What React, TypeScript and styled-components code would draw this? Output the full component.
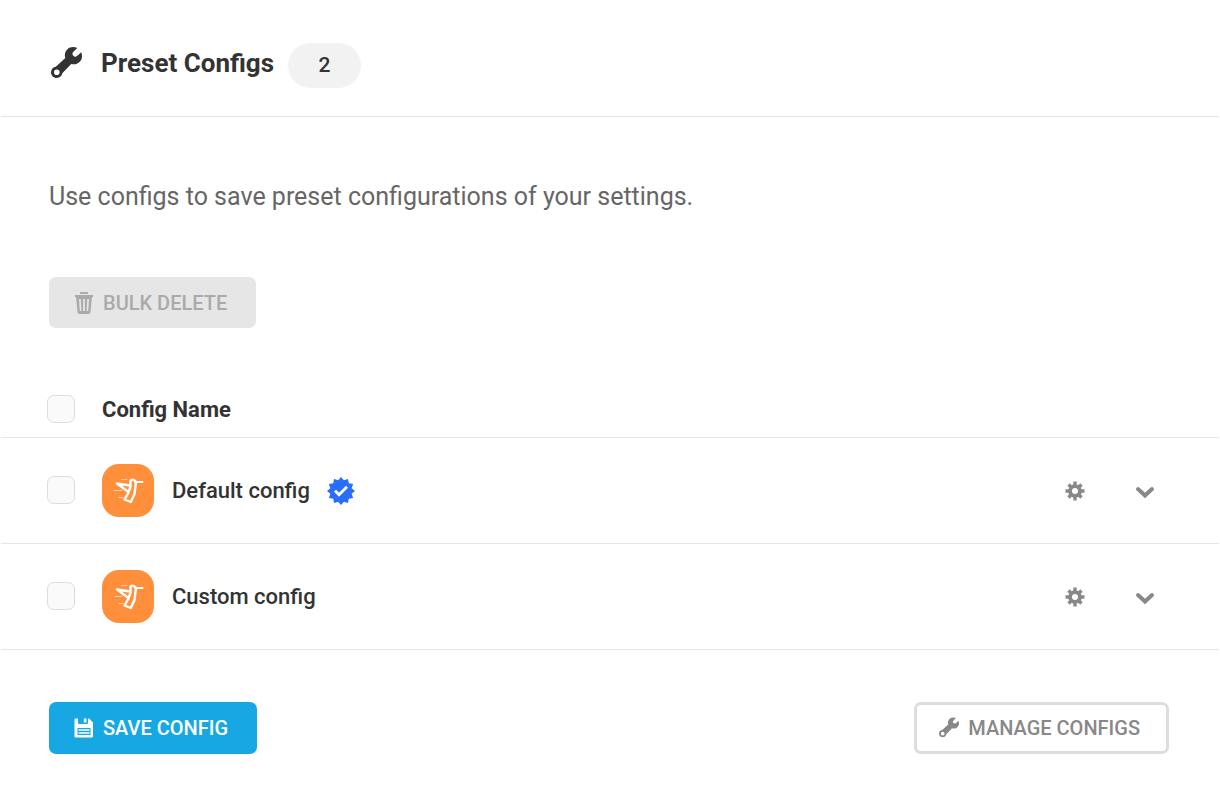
import React, { useState } from "react";
import styled, { createGlobalStyle, css } from "styled-components";

const GlobalStyle = createGlobalStyle`
  *, *::before, *::after { box-sizing: border-box; }
  body {
    margin: 0;
    background: #fff;
    color: #333;
    font-family: Roboto, "Liberation Sans", sans-serif;
  }
`;

const Panel = styled.main`
  padding: 0 1px;
`;

const PanelHeader = styled.header`
  display: flex;
  align-items: center;
  padding: 14px 48px 0;
  height: 117px;
  border-bottom: 1px solid #e6e6e6;
`;

const Title = styled.h1`
  display: flex;
  align-items: center;
  gap: 19px;
  margin: 0;
  padding: 0 0 4px 2px;
  font-size: 26px;
  line-height: 40px;
  font-weight: 700;
`;

const CountTag = styled.span`
  margin-left: 14px;
  min-width: 73px;
  border-radius: 23px;
  background: #f2f2f2;
  font-size: 21px;
  line-height: 45px;
  font-weight: 500;
  text-align: center;
`;

const Intro = styled.section`
  display: flex;
  flex-direction: column;
  align-items: flex-start;
  gap: 60px;
  padding: 60px 48px 54px;
`;

const Description = styled.p`
  margin: 0;
  color: #666;
  font-size: 25px;
  line-height: 40px;
`;

const Button = styled.button<{ $variant: "muted" | "primary" | "ghost" }>`
  display: flex;
  align-items: center;
  gap: 9px;
  height: 52px;
  padding: 0 29px 0 25px;
  border: 0;
  border-radius: 7px;
  font: 500 20px/28px Roboto, "Liberation Sans", sans-serif;
  text-transform: uppercase;
  cursor: pointer;

  ${(p) => p.$variant === "muted" && css`
    height: 51px;
    background: #e6e6e6;
    color: #aaa;
    cursor: default;
  `}
  ${(p) => p.$variant === "primary" && css`
    background: #17a8e3;
    color: #fff;
  `}
  ${(p) => p.$variant === "ghost" && css`
    padding: 0 26px 0 22px;
    border: 3px solid #ddd;
    background: transparent;
    color: #888;
  `}
`;

const Table = styled.table`
  width: 100%;
  border-collapse: separate;
  border-spacing: 0;
`;

const Cell = styled.td<{ $head?: boolean }>`
  height: ${(p) => (p.$head ? 56 : 106)}px;
  padding: 0;
  border-bottom: 1px solid #e6e6e6;
  font-size: 22px;
  line-height: 32px;
  font-weight: ${(p) => (p.$head ? 700 : 500)};
  text-align: left;
  vertical-align: middle;
`;

const CheckCell = styled(Cell)`
  width: 101px;
  padding: 0 0 2px 46px;
`;

const ActionCell = styled(Cell)`
  width: 220px;
  padding-right: 59px;
`;

const Checkbox = styled.input`
  appearance: none;
  display: block;
  width: 28px;
  height: 28px;
  margin: 0;
  border: 1px solid #ddd;
  border-radius: 7px;
  background: #fafafa;
  cursor: pointer;

  &:checked {
    border-color: #17a8e3;
    background: #17a8e3;
  }
`;

const ConfigLabel = styled.label`
  display: flex;
  align-items: center;
  gap: 17px;
`;

const Actions = styled.div`
  display: flex;
  justify-content: flex-end;
  gap: 40px;
`;

const IconButton = styled.button`
  display: flex;
  align-items: center;
  justify-content: center;
  width: 30px;
  height: 30px;
  padding: 0;
  border: 0;
  background: none;
  color: #888;
  cursor: pointer;
`;

const PanelFooter = styled.footer`
  display: flex;
  justify-content: space-between;
  padding: 52px 50px 40px 48px;
`;

const Wrench = ({ size }: { size: number }) => (
  <svg width={size} height={size} viewBox="0 1 31 31" overflow="visible" fill="currentColor" aria-hidden="true">
    <path
      fillRule="evenodd"
      d="M26.300 1C22.800-.6 18.700 0 16.200 2.500C13.900 4.800 13.300 8 14.300 10.900L4.800 19.700C2 20 0 22.200 0 25.200C0 28.500 2.500 31 5.800 31C8.600 31 10.900 29 11.300 26.300L20.200 17C23.200 17.900 26.500 17.100 28.800 14.800C31.300 12.300 31.700 8.500 30.200 5.200L26 9C24.800 9.900 23.400 9.900 22.500 8.900L22.100 8.500C21.200 7.500 21.300 6.200 22.200 5.100ZM5.800 22.500A2.800 2.800 0 1 0 5.800 28.100A2.800 2.800 0 1 0 5.800 22.500Z"
    />
  </svg>
);

const Trash = () => (
  <svg width="20" height="22" viewBox="0 0 20 22" fill="currentColor" aria-hidden="true">
    <path d="M6 0h8v2H6zM1 3h18v2H1z" />
    <path
      fillRule="evenodd"
      d="M2 5h16l-1.500 15q-.2 2-2 2h-9q-1.800 0-2-2zM5 7l.8 12h1.600L6.800 7zM9.100 7v12h1.800V7zM13.200 7l-.6 12h1.600L15 7z"
    />
  </svg>
);

const Floppy = () => (
  <svg width="20" height="20" viewBox="0 0 20 20" fill="currentColor" aria-hidden="true">
    <path
      fillRule="evenodd"
      d="M1.500 .5H4v4.500q0 1 1 1h8q1 0 1-1V.5h1l4 4v14q0 1-1 1H1.500q-1 0-1-1V1.500q0-1 1-1zM3.500 10v7h13v-7z"
    />
    <path d="M4.500 11.200h11v1.600h-11zM4.500 14.200h11v1.600h-11zM9.800 .5h2.700v4h-2.700z" />
  </svg>
);

const Gear = () => (
  <svg width="20" height="20" viewBox="-10 -10 20 20" fill="none" stroke="currentColor" aria-hidden="true">
    <circle r="4.900" strokeWidth="3.800" />
    <path
      strokeWidth="3.400"
      d="M0-9.500V-5M0 5V9.500M-9.500 0H-5M5 0H9.500M-6.500-6.500L-4-4M4 4L6.500 6.500M6.500-6.500L4-4M-4 4L-6.500 6.500"
    />
  </svg>
);

const Chevron = () => (
  <svg width="20" height="20" viewBox="0 0 20 20" fill="none" stroke="currentColor" aria-hidden="true">
    <path d="M3 8l7 6.500L17 8" strokeWidth="4" strokeLinecap="round" />
  </svg>
);

const HummingbirdLogo = () => (
  <svg width="53" height="53" viewBox="0 0 53 53" aria-hidden="true">
    <rect width="52" height="53" rx="17" fill="#ff8f3b" />
    <g fill="none" stroke="#fff" strokeLinejoin="round" strokeLinecap="round">
      <path strokeWidth="2.400" d="M28.500 16.500Q31.500 14.500 34 18L33.500 22L32.500 30L28.800 38L22.500 35.500L26 29.500L28.500 23ZM28 21.500L15 19.500L26.500 28" />
      <path strokeWidth="2" d="M33.500 18H40.500" />
      <path strokeWidth="1" opacity=".55" d="M19.500 15.500H25M12.500 26.500H20M16.500 33.500H21" />
    </g>
  </svg>
);

const starPoints = Array.from({ length: 24 }, (_, i) => {
  const angle = (i * Math.PI) / 12;
  const radius = i % 2 ? 11 : 14;
  return `${14 + radius * Math.sin(angle)},${14 - radius * Math.cos(angle)}`;
}).join(" ");

const VerifiedBadge = () => (
  <svg width="28" height="28" viewBox="0 0 28 28" role="img" aria-label="Default">
    <polygon points={starPoints} fill="#286efa" />
    <path d="M8 13.800L12 17.800L20 9.800" fill="none" stroke="#fff" strokeWidth="2.800" />
  </svg>
);

const configs = [
  { id: "default", name: "Default config", verified: true },
  { id: "custom", name: "Custom config", verified: false },
];

export default function App() {
  const [selected, setSelected] = useState<string[]>([]);
  const allSelected = selected.length === configs.length;
  const toggle = (id: string) =>
    setSelected((ids) => (ids.includes(id) ? ids.filter((x) => x !== id) : [...ids, id]));

  return (
    <>
      <GlobalStyle />
      <Panel>
        <PanelHeader>
          <Title>
            <Wrench size={31} />
            Preset Configs
          </Title>
          <CountTag>{configs.length}</CountTag>
        </PanelHeader>
        <Intro>
          <Description>Use configs to save preset configurations of your settings.</Description>
          <Button $variant="muted" type="button" disabled={selected.length === 0}>
            <Trash />
            Bulk Delete
          </Button>
        </Intro>
        <Table>
          <thead>
            <tr>
              <CheckCell $head>
                <Checkbox
                  id="select-all"
                  type="checkbox"
                  aria-label="Select all configs"
                  checked={allSelected}
                  onChange={() => setSelected(allSelected ? [] : configs.map((c) => c.id))}
                />
              </CheckCell>
              <Cell as="th" scope="col" $head>Config Name</Cell>
              <ActionCell $head />
            </tr>
          </thead>
          <tbody>
            {configs.map((config) => (
              <tr key={config.id}>
                <CheckCell>
                  <Checkbox
                    id={config.id}
                    type="checkbox"
                    checked={selected.includes(config.id)}
                    onChange={() => toggle(config.id)}
                  />
                </CheckCell>
                <Cell>
                  <ConfigLabel htmlFor={config.id}>
                    <HummingbirdLogo />
                    {config.name}
                    {config.verified && <VerifiedBadge />}
                  </ConfigLabel>
                </Cell>
                <ActionCell>
                  <Actions>
                    <IconButton type="button" aria-label={`${config.name} options`}>
                      <Gear />
                    </IconButton>
                    <IconButton type="button" aria-label={`Expand ${config.name}`}>
                      <Chevron />
                    </IconButton>
                  </Actions>
                </ActionCell>
              </tr>
            ))}
          </tbody>
        </Table>
        <PanelFooter>
          <Button $variant="primary" type="button">
            <Floppy />
            Save Config
          </Button>
          <Button $variant="ghost" type="button">
            <Wrench size={20} />
            Manage Configs
          </Button>
        </PanelFooter>
      </Panel>
    </>
  );
}
